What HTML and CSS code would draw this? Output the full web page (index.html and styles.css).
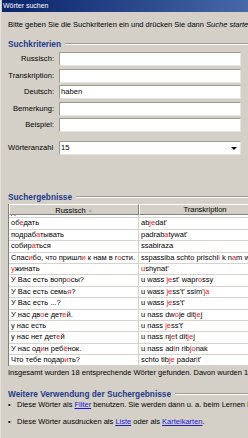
FILE: index.html
```html
<!DOCTYPE html>
<html lang="de">
<head>
<meta charset="utf-8">
<title>Wörter suchen</title>
<link rel="stylesheet" href="styles.css">
</head>
<body>
<div class="window">
  <div class="titlebar">Wörter suchen</div>
  <div class="content">
    <p class="intro">Bitte geben Sie die Suchkriterien ein und drücken Sie dann <i>Suche starten</i>.</p>

    <div class="group-title first"><span class="gt-text">Suchkriterien</span><span class="rule"></span></div>
    <div class="form">
      <label class="lbl">Russisch:</label><div class="input"></div>
      <label class="lbl">Transkription:</label><div class="input"></div>
      <label class="lbl">Deutsch:</label><div class="input">haben</div>
      <label class="lbl">Bemerkung:</label><div class="input"></div>
      <label class="lbl">Beispiel:</label><div class="input"></div>
    </div>
    <div class="form count">
      <label class="lbl left">Wörteranzahl</label>
      <div class="input select">15<span class="arrow"></span></div>
    </div>

    <div class="group-title results"><span class="gt-text">Suchergebnisse</span><span class="rule"></span></div>
    <div class="list">
      <div class="list-head">
        <div class="hcell">Russisch <span class="sort">▲</span></div>
        <div class="hcell">Transkription</div>
      </div>
      <div class="list-body">
        <div class="row partial"><div class="cell">давать</div><div class="cell">dawat'</div></div>
        <div class="row"><div class="cell">об<b>е</b>дать</div><div class="cell">ab<b>je</b>dat'</div></div>
        <div class="row"><div class="cell">подраб<b>а</b>тывать</div><div class="cell">padrab<b>a</b>tywat'</div></div>
        <div class="row"><div class="cell">собир<b>а</b>ться</div><div class="cell">ssabiraza</div></div>
        <div class="row"><div class="cell">Спас<b>и</b>бо, что пришл<b>и</b> к нам в г<b>о</b>сти.</div><div class="cell">sspassiba schto prischl<b>i</b> k n<b>a</b>m wgo</div></div>
        <div class="row"><div class="cell"><b>у</b>жинать</div><div class="cell"><b>u</b>shynat'</div></div>
        <div class="row"><div class="cell">У Вас есть вопр<b>о</b>сы?</div><div class="cell">u wass <b>je</b>st' wapr<b>o</b>ssy</div></div>
        <div class="row"><div class="cell">У Вас есть семь<b>я</b>?</div><div class="cell">u wass <b>je</b>ss't' ssim'<b>ja</b></div></div>
        <div class="row"><div class="cell">У Вас есть ...?</div><div class="cell">u wass <b>je</b>ss't'</div></div>
        <div class="row"><div class="cell">У нас дв<b>о</b>е дет<b>е</b>й.</div><div class="cell">u nass dw<b>o</b>je dit<b>je</b>j</div></div>
        <div class="row"><div class="cell">у нас есть</div><div class="cell">u nass <b>je</b>ss't'</div></div>
        <div class="row"><div class="cell">у нас нет дет<b>е</b>й</div><div class="cell">u nass nj<b>e</b>t dit<b>je</b>j</div></div>
        <div class="row"><div class="cell">У нас од<b>и</b>н реб<b>ё</b>нок.</div><div class="cell">u nass ad<b>i</b>n rib<b>jo</b>nak</div></div>
        <div class="row"><div class="cell">Что тебе подар<b>и</b>ть?</div><div class="cell">schto tib<b>je</b> padar<b>i</b>t'</div></div>
      </div>
    </div>
    <p class="status">Insgesamt wurden 18 entsprechende Wörter gefunden. Davon wurden 15 angezeigt.</p>

    <div class="group-title further"><span class="gt-text">Weitere Verwendung der Suchergebnisse</span><span class="rule"></span></div>
    <ul class="bullets">
      <li>Diese Wörter als <a href="#">Filter</a> benutzen. Sie werden dann u. a. beim Lernen berücksichtigt.</li>
      <li>Diese Wörter ausdrucken als <a href="#">Liste</a> oder als <a href="#">Karteikarten</a>.</li>
    </ul>
  </div>
</div>
</body>
</html>
```

FILE: styles.css
```css
html, body {
  margin: 0;
  padding: 0;
}
body {
  background: #d4d0c8;
  font-family: "Liberation Sans", Arial, sans-serif;
  font-size: 7.5px;
  color: #000;
}
.window {
  width: 248px;
  height: 438px;
  overflow: hidden;
  box-sizing: border-box;
  border-left: 1px solid #e4e2dc;
  padding-left: 1px;
  white-space: nowrap;
}
.titlebar {
  height: 12px;
  line-height: 12px;
  padding-left: 1px;
  font-size: 7px;
  color: #fff;
  background: linear-gradient(to right, #0a246a 0%, #2d4c8e 60%, #4868a8 100%);
}
.content {
  padding-left: 6px;
}
.intro {
  margin: 8px 0 0 0;
  line-height: 10px;
  height: 10px;
}
.group-title {
  display: flex;
  align-items: center;
  height: 10px;
  line-height: 10px;
  font-weight: bold;
  font-size: 8.3px;
  color: #1f3a8a;
}
.group-title.first { margin-top: 9px; }
.group-title.results { margin-top: 37px; }
.group-title.further { margin-top: 11px; }
.gt-text { flex: none; }
.rule {
  flex: 1;
  height: 0;
  margin-left: 4px;
  border-top: 1px solid #a09c94;
  border-bottom: 1px solid #ffffff;
}
.form {
  display: grid;
  grid-template-columns: 46px 182px;
  column-gap: 5px;
  row-gap: 2.5px;
  margin-top: 3px;
}
.form.count {
  margin-top: 9px;
}
.lbl {
  text-align: right;
  line-height: 14px;
  height: 14px;
  font-size: 7.6px;
}
.lbl.left {
  text-align: left;
}
.input {
  height: 14px;
  box-sizing: border-box;
  background: #fff;
  border: 1px solid #9c9a94;
  border-right-color: #e6e4de;
  border-bottom-color: #e6e4de;
  line-height: 12px;
  padding-left: 1px;
  font-size: 7.6px;
}
.select {
  display: flex;
  justify-content: space-between;
  align-items: center;
  padding-right: 3px;
}
.arrow {
  width: 0;
  height: 0;
  border-left: 3px solid transparent;
  border-right: 3px solid transparent;
  border-top: 3px solid #000;
}
.list {
  margin-top: 2px;
  width: 300px;
  border-left: 1px solid #808080;
  background: #fff;
}
.list-head {
  display: grid;
  grid-template-columns: 130px 132px;
  height: 11px;
  background: #d4d0c8;
}
.hcell {
  box-sizing: border-box;
  height: 11px;
  line-height: 10px;
  text-align: center;
  border-top: 1px solid #fff;
  border-left: 1px solid #fff;
  border-right: 1px solid #808080;
  border-bottom: 1px solid #808080;
}
.sort {
  color: #b0aca4;
  font-size: 5px;
  vertical-align: 1px;
}
.list-body {
  height: 151px;
  overflow: hidden;
}
.row {
  display: grid;
  grid-template-columns: 130px 132px;
  height: 11.4px;
  box-sizing: border-box;
  border-bottom: 1px solid #d6d3cc;
}
.row.partial {
  margin-top: -8px;
}
.cell {
  box-sizing: border-box;
  padding-left: 2px;
  line-height: 10.4px;
  border-right: 1px solid #d6d3cc;
  overflow: hidden;
}
.cell b {
  font-weight: normal;
  color: #e8182a;
}
.status {
  margin: 2px 0 0 0;
  line-height: 10px;
  height: 10px;
}
.bullets {
  list-style: none;
  margin: 1px 0 0 0;
  padding: 0;
}
.bullets li {
  line-height: 10px;
  height: 10px;
  padding-left: 9px;
  position: relative;
}
.bullets li + li {
  margin-top: 7px;
}
.bullets li::before {
  content: "•";
  position: absolute;
  left: 0;
  top: 0;
}
.bullets a {
  color: #1a1ad8;
  text-decoration: underline;
}
```
